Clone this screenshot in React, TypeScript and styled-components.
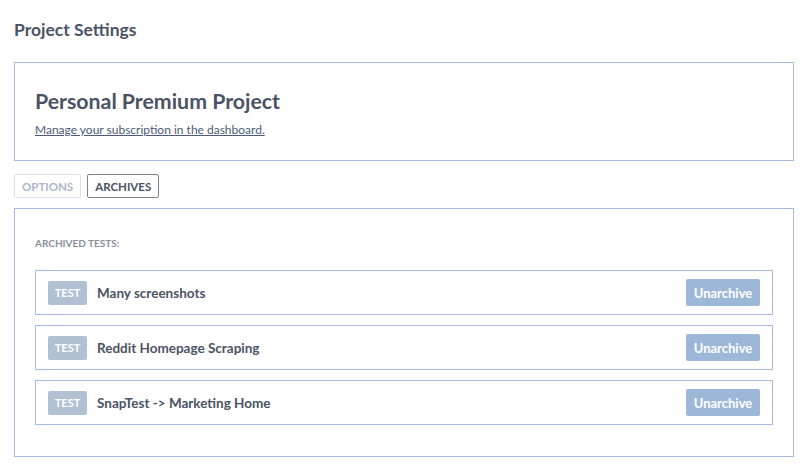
import React from "react";
import styled, { createGlobalStyle } from "styled-components";

const Global = createGlobalStyle`
  html, body { margin: 0; padding: 0; background: #fff; }
  body { font-family: Lato, "Open Sans", sans-serif; color: #4a5366; }
  * { box-sizing: border-box; }
`;

const Page = styled.div`
  padding: 18px 12px 0 14px;
  width: 806px;
`;

const Title = styled.h1`
  margin: 0;
  font-size: 17.5px;
  font-weight: 700;
  line-height: 24px;
  color: #4a5366;
`;

const Card = styled.section<{ $pad: string; $mt: number }>`
  border: 1px solid #a5bbe1;
  margin-top: ${(p) => p.$mt}px;
  padding: ${(p) => p.$pad};
`;

const ProjectName = styled.h2`
  margin: 0;
  font-size: 21.3px;
  font-weight: 700;
  line-height: 26px;
  color: #4a5366;
`;

const ManageLink = styled.a`
  display: inline-block;
  margin-top: 9px;
  font-size: 12px;
  line-height: 14px;
  color: #4a5a78;
  text-decoration: underline;
`;

const Tabs = styled.div`
  display: flex;
  gap: 6px;
  margin-top: 13px;
`;

const Tab = styled.button<{ $active?: boolean }>`
  font-family: inherit;
  height: 24px;
  padding: 0 7px;
  background: #fff;
  border: 1px solid ${(p) => (p.$active ? "#7b8495" : "#dde3ee")};
  border-radius: 2px;
  font-size: 11.5px;
  font-weight: 700;
  color: ${(p) => (p.$active ? "#4a5366" : "#aab6c8")};
`;

const SectionLabel = styled.div`
  font-size: 10px;
  font-weight: 700;
  color: #8a909b;
  line-height: 12px;
  margin-bottom: 21px;
`;

const List = styled.div`
  display: flex;
  flex-direction: column;
  gap: 10px;
`;

const Row = styled.div`
  display: flex;
  align-items: center;
  height: 45px;
  border: 1px solid #a5bbe1;
  padding: 0 12px;
`;

const Badge = styled.span`
  display: inline-flex;
  align-items: center;
  justify-content: center;
  width: 39px;
  height: 24px;
  border-radius: 2px;
  background: #b1c0d3;
  color: #fff;
  font-size: 11px;
  font-weight: 700;
`;

const Name = styled.span`
  margin-left: 10px;
  font-size: 13.5px;
  font-weight: 700;
  color: #4a5366;
  flex: 1;
`;

const UnarchiveButton = styled.button`
  font-family: inherit;
  height: 27px;
  width: 74px;
  padding: 0;
  border: none;
  border-radius: 2px;
  background: #9db7d9;
  color: #fff;
  font-size: 13px;
  font-weight: 700;
`;

const tests = ["Many screenshots", "Reddit Homepage Scraping", "SnapTest -> Marketing Home"];

export default function App() {
  return (
    <>
      <Global />
      <Page>
        <Title>Project Settings</Title>
        <Card $mt={20} $pad="25px 20px 23px 20px">
          <ProjectName>Personal Premium Project</ProjectName>
          <ManageLink href="#">Manage your subscription in the dashboard.</ManageLink>
        </Card>
        <Tabs>
          <Tab>OPTIONS</Tab>
          <Tab $active>ARCHIVES</Tab>
        </Tabs>
        <Card $mt={10} $pad="28px 20px 31px 20px">
          <SectionLabel>ARCHIVED TESTS:</SectionLabel>
          <List>
            {tests.map((t) => (
              <Row key={t}>
                <Badge>TEST</Badge>
                <Name>{t}</Name>
                <UnarchiveButton>Unarchive</UnarchiveButton>
              </Row>
            ))}
          </List>
        </Card>
      </Page>
    </>
  );
}
